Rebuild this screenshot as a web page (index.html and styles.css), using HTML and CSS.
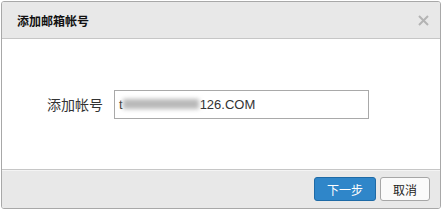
FILE: index.html
```html
<!DOCTYPE html>
<html>
<head>
<meta charset="utf-8">
<title>添加邮箱帐号</title>
<link rel="stylesheet" href="styles.css">
</head>
<body>

<div class="dialog">
  <div class="dialog-head">
    <span class="dialog-title">添加邮箱帐号</span>
    <svg class="dialog-close" width="11" height="11" viewBox="0 0 11 11">
      <path d="M1 1L10 10M10 1L1 10" stroke="#b4b4b4" stroke-width="2" fill="none"/>
    </svg>
  </div>
  <div class="dialog-body">
    <label class="field-label">添加帐号</label>
    <div class="field-input">
      <span>t</span><span class="masked"></span><span>126.COM</span>
    </div>
  </div>
  <div class="dialog-foot">
    <button class="btn btn-primary">下一步</button>
    <button class="btn">取消</button>
  </div>
</div>

</body>
</html>
```

FILE: styles.css
```css
body {
  margin: 0;
  background: #ffffff;
  font-family: "Liberation Sans", "Noto Sans CJK SC", sans-serif;
  font-size: 12px;
  color: #222;
}
.dialog {
  width: 438px;
  height: 206px;
  margin: 1px 0 0 1px;
  border: 1px solid #a8a8a8;
  border-radius: 3px;
  overflow: hidden;
  display: flex;
  flex-direction: column;
}
.dialog-head {
  height: 36px;
  background: #e8e8e8;
  border-bottom: 1px solid #c6c6c6;
  display: flex;
  align-items: center;
  justify-content: space-between;
  padding: 0 11px 0 15px;
}
.dialog-title {
  font-weight: bold;
  font-size: 12px;
  color: #111;
}
.dialog-close {
  display: block;
}
.dialog-body {
  flex: 1;
  background: #fff;
  display: flex;
  align-items: center;
  padding: 0 0 0 45px;
}
.field-label {
  font-size: 14px;
  color: #333;
  width: 67px;
}
.field-input {
  width: 249px;
  height: 27px;
  border: 1px solid #a9a9a9;
  display: flex;
  align-items: center;
  padding-left: 4px;
  font-size: 13px;
  color: #333;
}
.masked {
  display: inline-block;
  width: 76px;
  height: 10px;
  background: #b9b9b9;
  filter: blur(2px);
  margin: 0 1px 0 0;
}
.dialog-foot {
  height: 38px;
  background: #e8e8e8;
  border-top: 1px solid #c6c6c6;
  box-shadow: inset 0 1px 0 #f4f4f4;
  display: flex;
  align-items: center;
  justify-content: flex-end;
  gap: 4px;
  padding-right: 10px;
}
.btn {
  height: 24px;
  padding: 0 12px;
  border: 1px solid #a6a6a6;
  border-radius: 3px;
  background: #fafafa;
  font-family: "Noto Sans CJK SC", sans-serif;
  font-size: 12px;
  color: #222;
}
.btn-primary {
  width: 62px;
  background: #2f86c9;
  border-color: #1e6aa6;
  color: #fff;
}
```
